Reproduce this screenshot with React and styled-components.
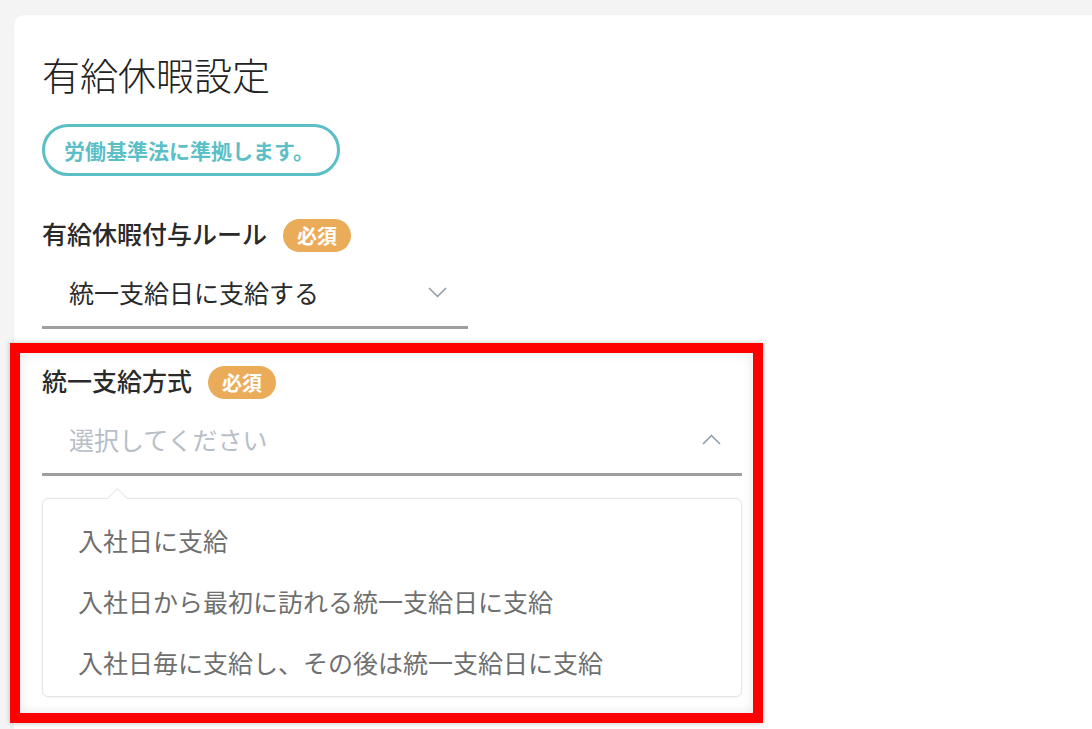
import styled, { createGlobalStyle } from "styled-components";

const GlobalStyle = createGlobalStyle`
  html, body {
    margin: 0;
    padding: 0;
    background: #f4f4f4;
    overflow: hidden;
  }
  body {
    font-family: "Noto Sans CJK JP", "Noto Sans", sans-serif;
  }
`;

const Page = styled.div`
  padding: 15px 0 0 14px;
  height: 100vh;
  box-sizing: border-box;
`;

const Card = styled.div`
  background: #ffffff;
  border-radius: 10px 0 0 0;
  margin-right: -20px;
  min-height: 800px;
  padding: 36px 28px 0;
  box-shadow: 0 0 2px rgba(0, 0, 0, 0.04);
`;

const Title = styled.h1`
  margin: 0;
  font-size: 38px;
  line-height: 46px;
  font-weight: 300;
  color: #222222;
`;

const NoticePill = styled.div`
  display: inline-flex;
  align-items: center;
  box-sizing: border-box;
  height: 52px;
  margin-top: 27px;
  padding: 0 23px 0 19px;
  border: 3px solid #5bbfc8;
  border-radius: 26px;
  color: #5bbfc8;
  font-size: 21px;
  font-weight: 700;
`;

const FieldLabel = styled.div`
  display: flex;
  align-items: center;
  gap: 16px;
  height: 34px;
  margin-top: ${({ $top }) => $top || 0}px;
  font-size: 25px;
  font-weight: 500;
  color: #2a2a2a;
`;

const Required = styled.span`
  display: inline-flex;
  align-items: center;
  justify-content: center;
  height: 33px;
  padding: 0 14px;
  border-radius: 17px;
  background: #ebac5a;
  color: #ffffff;
  font-size: 20px;
  font-weight: 700;
  margin-top: 4px;
`;

const Select = styled.div`
  display: flex;
  align-items: center;
  justify-content: space-between;
  box-sizing: border-box;
  width: ${({ $width }) => $width}px;
  height: 73px;
  margin-top: 6px;
  padding: 2px 21px 0 27px;
  border-bottom: 3px solid #9e9e9e;
  font-size: 25px;
  color: ${({ $placeholder }) => ($placeholder ? "#b7bec7" : "#2a2a2a")};
`;

const Highlight = styled.div`
  width: 753px;
  box-sizing: border-box;
  margin: 14px 0 0 -32px;
  padding: 10px 11px 16px 22px;
  border: 10px solid #ff0000;
  box-shadow: 0 0 5px rgba(0, 0, 0, 0.25), inset 0 0 12px rgba(0, 0, 0, 0.1);
`;

const Menu = styled.ul`
  position: relative;
  list-style: none;
  margin: 22px 0 0;
  padding: 10px 0 4px;
  background: #ffffff;
  border: 1px solid #e3e4ea;
  border-radius: 6px;
  box-shadow: 0 1px 4px rgba(0, 0, 0, 0.04);

  &::before {
    content: "";
    position: absolute;
    top: -8px;
    left: 67px;
    width: 14px;
    height: 14px;
    background: #ffffff;
    border-top: 1px solid #e3e4ea;
    border-left: 1px solid #e3e4ea;
    transform: rotate(45deg);
  }
`;

const MenuItem = styled.li`
  display: flex;
  align-items: center;
  height: 61px;
  padding-left: 35px;
  font-size: 25px;
  color: #6f6f6f;
`;

const Chevron = ({ up }) => (
  <svg width="19" height="11" viewBox="0 0 19 11" fill="none">
    <polyline
      points={up ? "1,10 9.5,1.5 18,10" : "1,1 9.5,9.5 18,1"}
      stroke="#8c9aa6"
      strokeWidth="1.5"
    />
  </svg>
);

const options = [
  "入社日に支給",
  "入社日から最初に訪れる統一支給日に支給",
  "入社日毎に支給し、その後は統一支給日に支給",
];

export default function App() {
  return (
    <>
      <GlobalStyle />
      <Page>
        <Card>
          <Title>有給休暇設定</Title>
          <NoticePill>労働基準法に準拠します。</NoticePill>

          <FieldLabel $top={40}>
            有給休暇付与ルール
            <Required>必須</Required>
          </FieldLabel>
          <Select $width={426}>
            統一支給日に支給する
            <Chevron />
          </Select>

          <Highlight>
            <FieldLabel>
              統一支給方式
              <Required>必須</Required>
            </FieldLabel>
            <Select $width={700} $placeholder>
              選択してください
              <Chevron up />
            </Select>
            <Menu>
              {options.map((o) => (
                <MenuItem key={o}>{o}</MenuItem>
              ))}
            </Menu>
          </Highlight>

          <FieldLabel>振込給付日</FieldLabel>
        </Card>
      </Page>
    </>
  );
}
